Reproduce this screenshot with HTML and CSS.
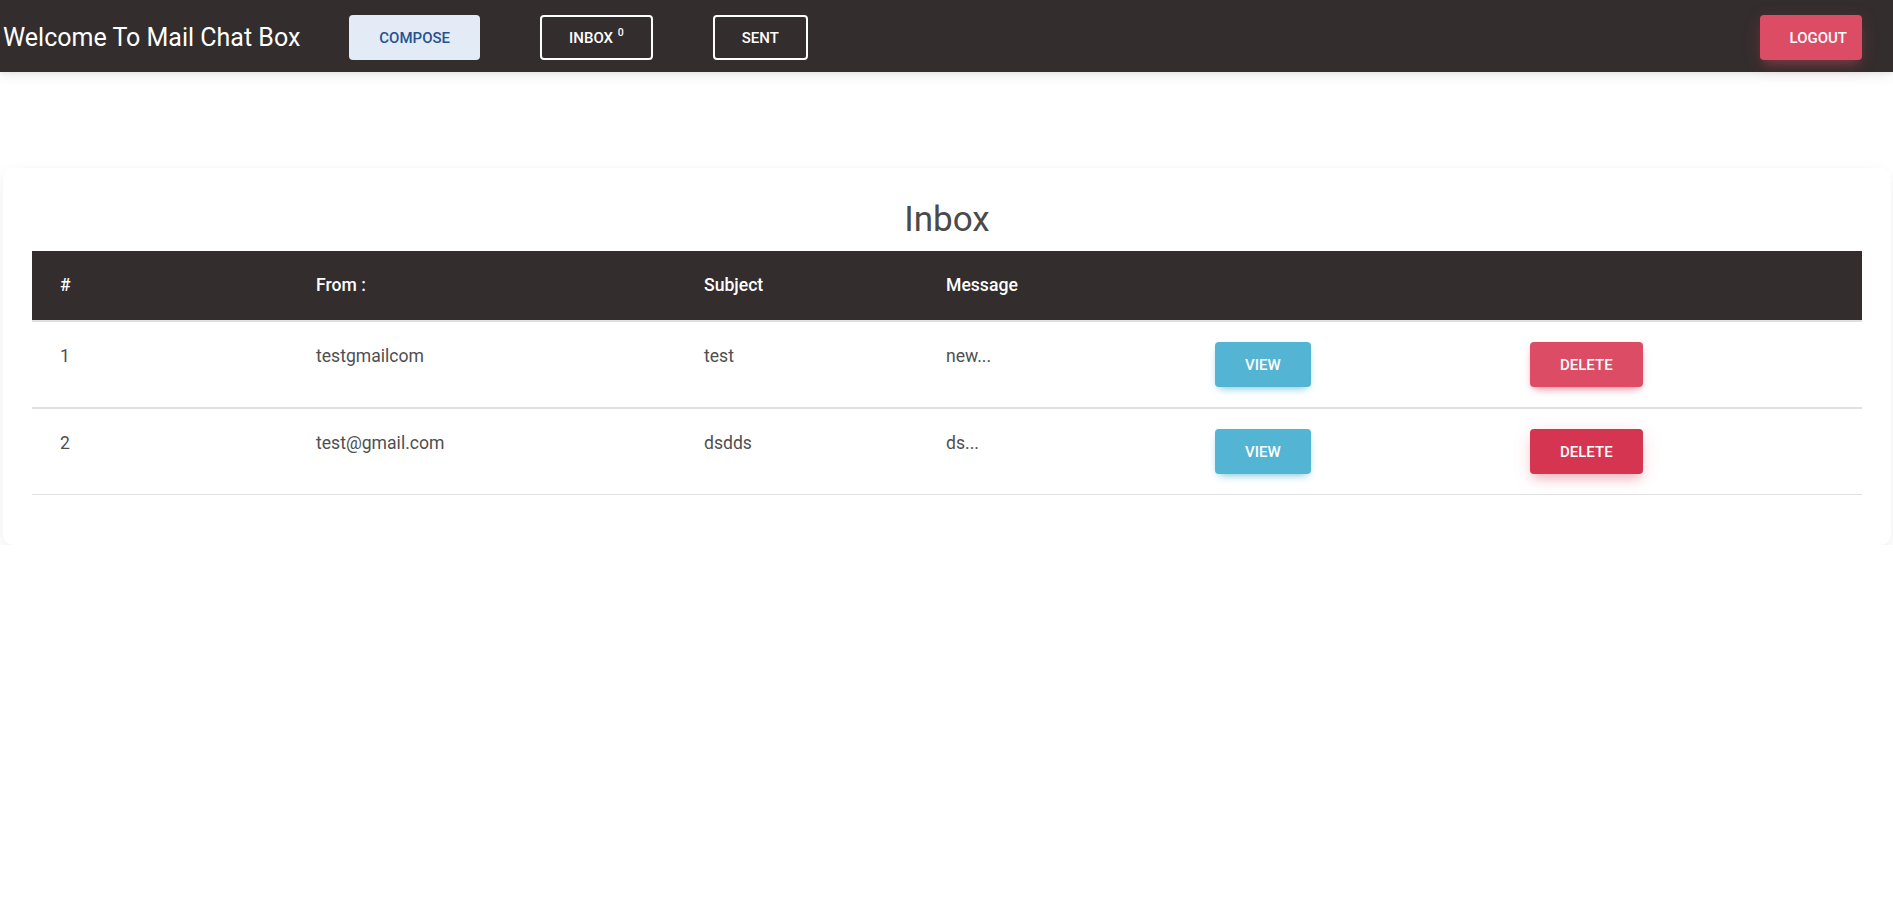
FILE: index.html
```html
<!DOCTYPE html>
<html lang="en">
<head>
<meta charset="utf-8">
<title>Mail Chat Box</title>
<link rel="stylesheet" href="styles.css">
</head>
<body>
<nav class="navbar">
  <div class="brand">Welcome To Mail Chat Box</div>
  <div class="nav-actions">
    <button class="btn btn-secondary">Compose</button>
    <button class="btn btn-outline"><span>Inbox <sup class="count">0</sup></span></button>
    <button class="btn btn-outline">Sent</button>
  </div>
  <button class="btn btn-danger btn-logout">Logout</button>
</nav>
<main class="main">
  <section class="card">
    <h2 class="card-title">Inbox</h2>
    <table class="table">
      <colgroup>
        <col class="c1"><col class="c2"><col class="c3"><col class="c4"><col class="c5"><col class="c6">
      </colgroup>
      <thead>
        <tr><th>#</th><th>From :</th><th>Subject</th><th>Message</th><th></th><th></th></tr>
      </thead>
      <tbody>
        <tr class="row-first">
          <td>1</td><td>testgmailcom</td><td>test</td><td>new...</td>
          <td><button class="btn btn-info">View</button></td>
          <td><button class="btn btn-danger">Delete</button></td>
        </tr>
        <tr class="row-last">
          <td>2</td><td>test@gmail.com</td><td>dsdds</td><td>ds...</td>
          <td><button class="btn btn-info">View</button></td>
          <td><button class="btn btn-danger btn-active">Delete</button></td>
        </tr>
      </tbody>
    </table>
  </section>
</main>
</body>
</html>
```
FILE: styles.css
```css
* { box-sizing: border-box; }
html, body { margin: 0; padding: 0; }
body {
  font-family: Roboto, "Liberation Sans", Arial, sans-serif;
  background: #ffffff;
  color: #4f4f4f;
}

.navbar {
  height: 72px;
  background: #332d2d;
  display: flex;
  align-items: center;
  padding: 3px 31px 0 2px;
  box-shadow: 0 4px 12px 0 rgba(0,0,0,.07), 0 2px 4px rgba(0,0,0,.05);
  position: relative;
  z-index: 1;
}
.brand {
  color: #ffffff;
  font-size: 25px;
  font-weight: 400;
  line-height: 1.2;
  padding-left: 1px;
}
.nav-actions {
  display: flex;
  gap: 60px;
  margin-left: 49px;
  flex: 1;
}

.btn {
  font-family: Roboto, "Liberation Sans", Arial, sans-serif;
  display: inline-flex;
  align-items: center;
  justify-content: center;
  height: 45px;
  padding: 1px 30px 0;
  font-size: 15px;
  font-weight: 500;
  text-transform: uppercase;
  border: 0;
  border-radius: 4px;
  line-height: 1;
  color: #ffffff;
  cursor: pointer;
  white-space: nowrap;
}
.btn-secondary {
  background: #e3ebf7;
  color: #285192;
  padding: 1px 30px 0 30px;
}
.btn-outline {
  background: transparent;
  border: 2px solid #ffffff;
  padding: 1px 27px 0;
  color: #ffffff;
}
.count {
  font-size: 10.5px;
  line-height: 0;
  vertical-align: 0;
  position: relative;
  top: -7px;
  margin-left: 1px;
}
.btn-danger {
  background: #dc4c64;
  box-shadow: 0 4px 9px -4px #dc4c64;
}
.btn-logout {
  padding: 1px 15px 0 30px;
  box-shadow: 0 8px 9px -4px rgba(220,76,100,.3), 0 4px 18px 0 rgba(220,76,100,.2);
}
.btn-active {
  background: #d63551;
  box-shadow: 0 8px 9px -4px rgba(220,76,100,.3), 0 4px 18px 0 rgba(220,76,100,.2);
}
.btn-info {
  background: #54b4d3;
  box-shadow: 0 4px 9px -4px #54b4d3;
}

.main {
  padding: 96px 2px 0 3px;
}
.card {
  background: #ffffff;
  border-radius: 10px;
  padding: 31px 29px 50px;
  box-shadow: 0 2px 15px -3px rgba(0,0,0,.07), 0 10px 20px -2px rgba(0,0,0,.04);
}
.card-title {
  margin: 0 0 10px;
  text-align: center;
  font-size: 35px;
  font-weight: 400;
  line-height: 42px;
  color: #4a4a4a;
}

.table {
  width: 100%;
  table-layout: fixed;
  border-collapse: collapse;
  font-size: 17.6px;
}
.c1 { width: 256px; }
.c2 { width: 388px; }
.c3 { width: 242px; }
.c4 { width: 269px; }
.c5 { width: 315px; }
.c6 { width: 360px; }
.table th {
  background: #332d2d;
  color: #ffffff;
  font-weight: 500;
  text-align: left;
  padding: 20px 10px 20px 28px;
  line-height: 29px;
  border-bottom: 2px solid #e0e0e0;
}
.table td {
  vertical-align: top;
  padding: 20px 10px 20px 28px;
  line-height: 28px;
  color: #4f4f4f;
}
.row-first td { border-bottom: 2px solid #e0e0e0; }
.row-last td { border-bottom: 1px solid #e0e0e0; }
```
